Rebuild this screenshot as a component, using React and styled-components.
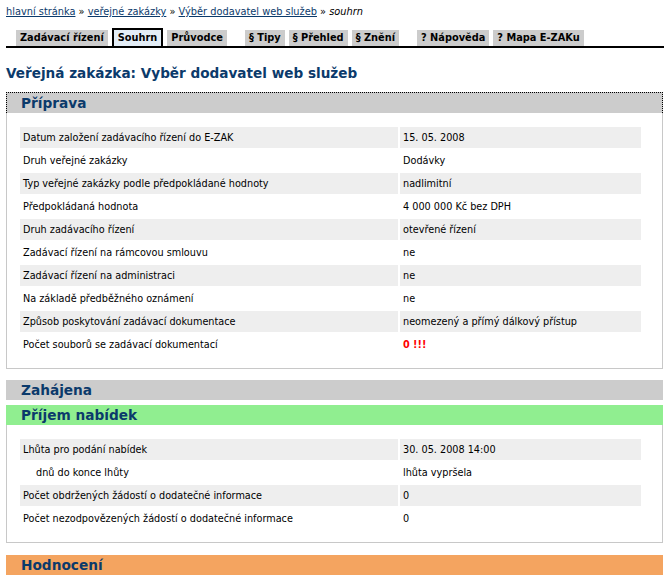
import React from "react";
import styled, { createGlobalStyle } from "styled-components";

const Global = createGlobalStyle`
  html, body { margin: 0; padding: 0; background: #fff; }
  body {
    font-family: "DejaVu Sans", "Bitstream Vera Sans", Verdana, sans-serif;
    font-size: 9.7px;
    color: #000;
  }
`;

const Page = styled.div`
  width: 657px;
  padding: 5px 6px 0 6px;
`;

const Crumbs = styled.div`
  font-size: 9.8px;
  line-height: 14px;
  a { color: #0b3a6b; text-decoration: underline; }
  em { font-style: italic; }
`;

const TabBar = styled.div`
  display: flex;
  align-items: flex-end;
  margin-top: 9px;
  padding-left: 10px;
  border-bottom: 2px solid #000;
  width: 648px;
`;

const Tab = styled.div`
  font-weight: bold;
  font-size: 9.8px;
  line-height: 16px;
  height: 16px;
  padding: 0 4px;
  background: ${(p) => (p.$active ? "#e3edf6" : "#cccccc")};
  margin-right: ${(p) => (p.$gapAfter ? "18px" : "4px")};
  ${(p) =>
    p.$active &&
    `border: 2px solid #000; border-bottom: none; padding: 0 4px;`}
  color: #000;
`;

const Title = styled.h1`
  margin: 15px 0 9px 0;
  font-size: 13.6px;
  font-weight: bold;
  color: #0b3a6b;
  line-height: 20px;
`;

const Section = styled.section`
  margin-bottom: ${(p) => p.$mb ?? 11}px;
`;

const Head = styled.div`
  background: ${(p) => p.$bg};
  color: #0b3a6b;
  font-weight: bold;
  font-size: 13.7px;
  line-height: 20px;
  height: 20px;
  padding-left: ${(p) => (p.$focus ? 14 : 15)}px;
  ${(p) => p.$focus && `border: 1px dotted #000; border-bottom: none;`}
`;

const Box = styled.div`
  border: 1px solid #c8c8c8;
  border-top: none;
  padding: 12px 0 11px 11px;
`;

const Table = styled.table`
  border-collapse: separate;
  border-spacing: 2px;
  width: 625px;
  font-size: 9.7px;
`;

const Row = styled.tr`
  td {
    height: 21px;
    padding: 0 0 0 ${(p) => (p.$indent ? 16 : 3)}px;
    background: ${(p) => (p.$shade ? "#eeeeee" : "transparent")};
    vertical-align: middle;
  }
  td + td {
    padding-left: 3px;
    width: 238px;
  }
`;

const Alert = styled.span`
  color: #ff0000;
  font-weight: bold;
`;

const prip = [
  ["Datum založení zadávacího řízení do E-ZAK", "15. 05. 2008"],
  ["Druh veřejné zakázky", "Dodávky"],
  ["Typ veřejné zakázky podle předpokládané hodnoty", "nadlimitní"],
  ["Předpokládaná hodnota", "4 000 000 Kč bez DPH"],
  ["Druh zadávacího řízení", "otevřené řízení"],
  ["Zadávací řízení na rámcovou smlouvu", "ne"],
  ["Zadávací řízení na administraci", "ne"],
  ["Na základě předběžného oznámení", "ne"],
  ["Způsob poskytování zadávací dokumentace", "neomezený a přímý dálkový přístup"],
  ["Počet souborů se zadávací dokumentací", <Alert>0 !!!</Alert>],
];

const prijem = [
  ["Lhůta pro podání nabídek", "30. 05. 2008 14:00"],
  ["dnů do konce lhůty", "lhůta vypršela", true],
  ["Počet obdržených žádostí o dodatečné informace", "0"],
  ["Počet nezodpovězených žádostí o dodatečné informace", "0"],
];

const tabs = [
  { t: "Zadávací řízení" },
  { t: "Souhrn", active: true },
  { t: "Průvodce", gap: true },
  { t: "§ Tipy" },
  { t: "§ Přehled" },
  { t: "§ Znění", gap: true },
  { t: "? Nápověda" },
  { t: "? Mapa E-ZAKu" },
];

function DataTable({ rows }) {
  return (
    <Table>
      <tbody>
        {rows.map(([a, b, ind], i) => (
          <Row key={i} $shade={i % 2 === 0} $indent={ind}>
            <td>{a}</td>
            <td>{b}</td>
          </Row>
        ))}
      </tbody>
    </Table>
  );
}

export default function App() {
  return (
    <>
      <Global />
      <Page>
        <Crumbs>
          <a href="#">hlavní stránka</a> » <a href="#">veřejné zakázky</a> »{" "}
          <a href="#">Výběr dodavatel web služeb</a> » <em>souhrn</em>
        </Crumbs>
        <TabBar>
          {tabs.map((x) => (
            <Tab key={x.t} $active={x.active} $gapAfter={x.gap}>
              {x.t}
            </Tab>
          ))}
        </TabBar>
        <Title>Veřejná zakázka: Vyběr dodavatel web služeb</Title>
        <Section>
          <Head $bg="#cccccc" $focus>Příprava</Head>
          <Box>
            <DataTable rows={prip} />
          </Box>
        </Section>
        <Section $mb={5}>
          <Head $bg="#cccccc">Zahájena</Head>
        </Section>
        <Section $mb={12}>
          <Head $bg="#90ee90">Příjem nabídek</Head>
          <Box>
            <DataTable rows={prijem} />
          </Box>
        </Section>
        <Section>
          <Head $bg="#f4a460">Hodnocení</Head>
        </Section>
      </Page>
    </>
  );
}
